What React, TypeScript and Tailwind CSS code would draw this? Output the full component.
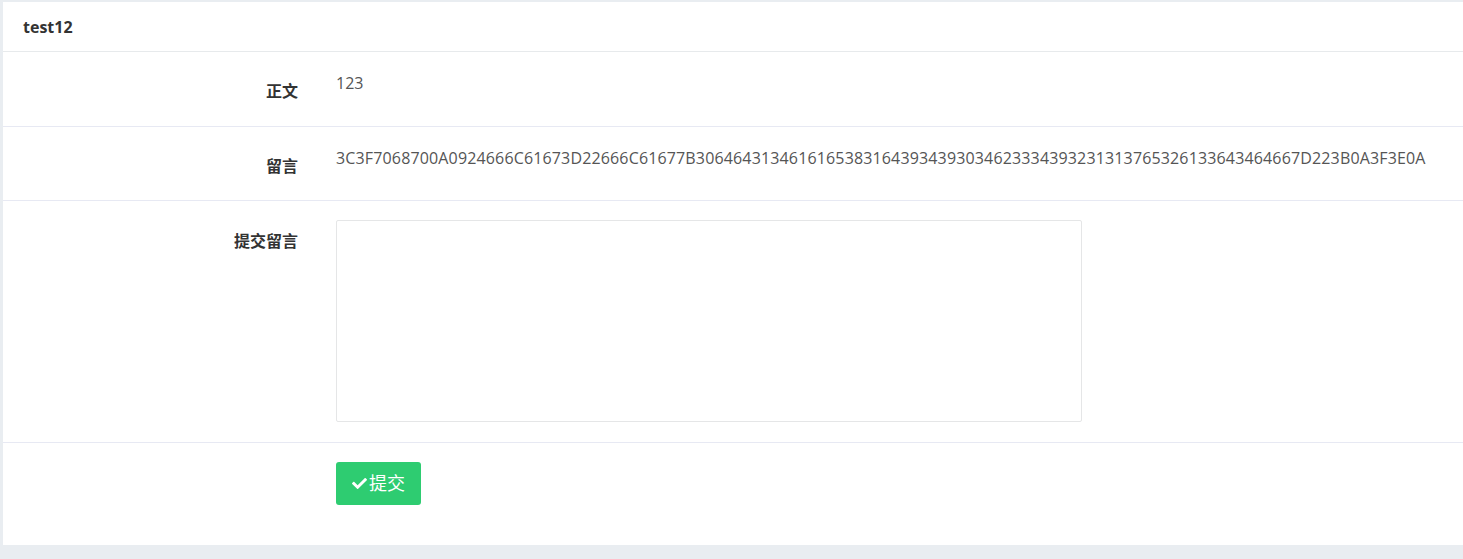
import { FaCheck } from 'react-icons/fa';

const HEX =
  '3C3F7068700A0924666C61673D22666C61677B30646431346161653831643934393034623334393231313765326133643464667D223B0A3F3E0A';

function Label({ text, pt }: { text: string; pt: string }) {
  return (
    <div className={`w-[295px] shrink-0 text-right text-[16px] font-bold leading-5 text-[#333] ${pt}`}>
      {text}
    </div>
  );
}

export default function App() {
  return (
    <div className="h-[559px] bg-[#e9edf1] pl-[3px] pt-[2px] font-['Open_Sans','Noto_Sans_CJK_SC',sans-serif]">
      <div className="bg-white">
        {/* 标题 */}
        <div className="flex h-[50px] items-center border-b border-[#e7eaec] px-[20px] text-[16px] font-bold text-[#333]">
          test12
        </div>

        {/* 正文 */}
        <div className="flex h-[75px] gap-[38px] border-b border-[#e7e9f3]">
          <Label text="正文" pt="pt-[29px]" />
          <div className="pt-[21px] text-[16px] leading-5 text-[#555]">123</div>
        </div>

        {/* 留言 */}
        <div className="flex h-[74px] gap-[38px] border-b border-[#e7e9f3]">
          <Label text="留言" pt="pt-[29px]" />
          <div className="pt-[21px] text-[16px] leading-5 tracking-[0.15px] text-[#555]">{HEX}</div>
        </div>

        {/* 提交留言 */}
        <div className="flex h-[242px] gap-[38px] border-b border-[#e7e9f3]">
          <Label text="提交留言" pt="pt-[30px]" />
          <div className="pt-[19px]">
            <textarea className="block h-[202px] w-[746px] resize-none rounded-[2px] border border-[#e5e6e7] outline-none" />
          </div>
        </div>

        {/* 按钮 */}
        <div className="flex h-[102px] gap-[38px]">
          <div className="w-[295px] shrink-0" />
          <div className="pt-[19px]">
            <button className="flex h-[43px] w-[85px] items-center justify-center gap-[2px] rounded-[3px] bg-[#2ecc71] text-[18px] text-white">
              <FaCheck className="h-[15px] w-[15px]" />
              提交
            </button>
          </div>
        </div>
      </div>
    </div>
  );
}
